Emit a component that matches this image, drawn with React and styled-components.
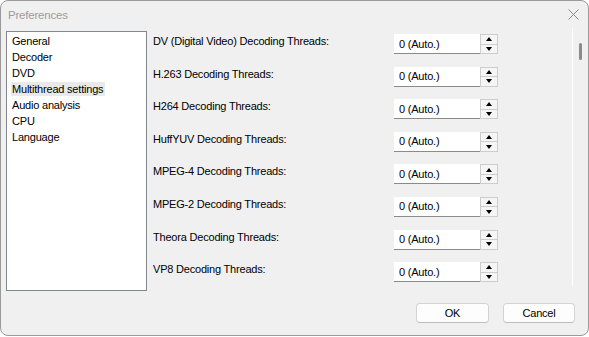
import styled, { createGlobalStyle } from 'styled-components';

const GlobalStyle = createGlobalStyle`
  html, body {
    margin: 0;
    padding: 0;
    background: #ffffff;
  }
  body {
    font-family: 'Liberation Sans', Arial, sans-serif;
    font-size: 11px;
    letter-spacing: -0.2px;
    color: #000;
  }
`;

const Window = styled.div`
  box-sizing: border-box;
  width: 589px;
  height: 336px;
  border: 1px solid #9a9a9a;
  border-radius: 8px;
  background: #f0f0f0;
  display: flex;
  flex-direction: column;
  overflow: hidden;
`;

const TitleBar = styled.div`
  height: 27px;
  display: flex;
  align-items: center;
  justify-content: space-between;
  padding: 0 9px 0 7px;
`;

const Title = styled.span`
  color: #9c9c9c;
  font-size: 11.5px;
  letter-spacing: -0.2px;
`;

const Body = styled.div`
  display: flex;
  height: 263px;
  padding-left: 5px;
`;

const List = styled.div`
  box-sizing: border-box;
  width: 141px;
  height: 260px;
  margin-top: 3px;
  border: 1px solid #828790;
  background: #ffffff;
  padding: 1px 0 0 4px;
`;

const Item = styled.div`
  height: 16px;
  display: flex;
  align-items: center;
`;

const ItemText = styled.span`
  line-height: 14px;
  padding: 0 2px 0 1px;
  background: ${(p) => (p.$selected ? '#e9e9e9' : 'transparent')};
`;

const Panel = styled.div`
  flex: 1;
  padding: 6px 0 0 6px;
  display: flex;
  flex-direction: column;
  gap: 12.6px;
`;

const Row = styled.div`
  display: flex;
  align-items: flex-start;
  height: 20px;
`;

const Label = styled.div`
  width: 241px;
  line-height: 14px;
`;

const Field = styled.div`
  display: flex;
  height: 20px;
`;

const Input = styled.div`
  box-sizing: border-box;
  width: 86px;
  height: 20px;
  background: #ffffff;
  border-bottom: 1px solid #8a8a8a;
  padding-left: 5px;
  display: flex;
  align-items: center;
`;

const Spin = styled.div`
  box-sizing: border-box;
  width: 18px;
  height: 20px;
  display: flex;
  flex-direction: column;
  border: 1px solid #cdcdcd;
  background: #f5f5f5;
`;

const SpinHalf = styled.div`
  flex: 1;
  display: flex;
  align-items: center;
  justify-content: center;
  border-top: ${(p) => (p.$down ? '1px solid #cdcdcd' : 'none')};
`;

const Arrow = styled.span`
  width: 0;
  height: 0;
  border-left: 3.5px solid transparent;
  border-right: 3.5px solid transparent;
  ${(p) =>
    p.$down ? 'border-top: 4px solid #000;' : 'border-bottom: 4px solid #000;'}
`;

const ScrollTrack = styled.div`
  box-sizing: border-box;
  width: 16px;
  height: 258px;
  border-left: 1px solid #ffffff;
  padding: 15px 0 0 6px;
`;

const Thumb = styled.div`
  width: 3px;
  height: 17px;
  border-radius: 2px;
  background: #8b8b8b;
`;

const Footer = styled.div`
  display: flex;
  justify-content: flex-end;
  gap: 14px;
  padding: 12px 13px 0 0;
`;

const Button = styled.button`
  box-sizing: border-box;
  width: ${(p) => p.$w}px;
  height: 20px;
  border: 1px solid #d3d3d3;
  border-bottom-color: #bdbdbd;
  border-radius: 4px;
  background: #fdfdfd;
  font-family: inherit;
  font-size: 11px;
  letter-spacing: -0.2px;
  color: #000;
  padding: 0;
`;

const items = [
  'General',
  'Decoder',
  'DVD',
  'Multithread settings',
  'Audio analysis',
  'CPU',
  'Language',
];

const decoders = [
  'DV (Digital Video) Decoding Threads:',
  'H.263 Decoding Threads:',
  'H264 Decoding Threads:',
  'HuffYUV Decoding Threads:',
  'MPEG-4 Decoding Threads:',
  'MPEG-2 Decoding Threads:',
  'Theora Decoding Threads:',
  'VP8 Decoding Threads:',
];

const CloseIcon = () => (
  <svg width="11" height="11" viewBox="0 0 11 11">
    <path d="M0.5 0.5 L10.5 10.5 M10.5 0.5 L0.5 10.5" stroke="#8a8a8a" strokeWidth="1" />
  </svg>
);

export default function App() {
  return (
    <>
      <GlobalStyle />
      <Window>
        <TitleBar>
          <Title>Preferences</Title>
          <CloseIcon />
        </TitleBar>
        <Body>
          <List>
            {items.map((it) => (
              <Item key={it}>
                <ItemText $selected={it === 'Multithread settings'}>{it}</ItemText>
              </Item>
            ))}
          </List>
          <Panel>
            {decoders.map((d) => (
              <Row key={d}>
                <Label>{d}</Label>
                <Field>
                  <Input>0 (Auto.)</Input>
                  <Spin>
                    <SpinHalf>
                      <Arrow />
                    </SpinHalf>
                    <SpinHalf $down>
                      <Arrow $down />
                    </SpinHalf>
                  </Spin>
                </Field>
              </Row>
            ))}
          </Panel>
          <ScrollTrack>
            <Thumb />
          </ScrollTrack>
        </Body>
        <Footer>
          <Button $w={73}>OK</Button>
          <Button $w={72}>Cancel</Button>
        </Footer>
      </Window>
    </>
  );
}
